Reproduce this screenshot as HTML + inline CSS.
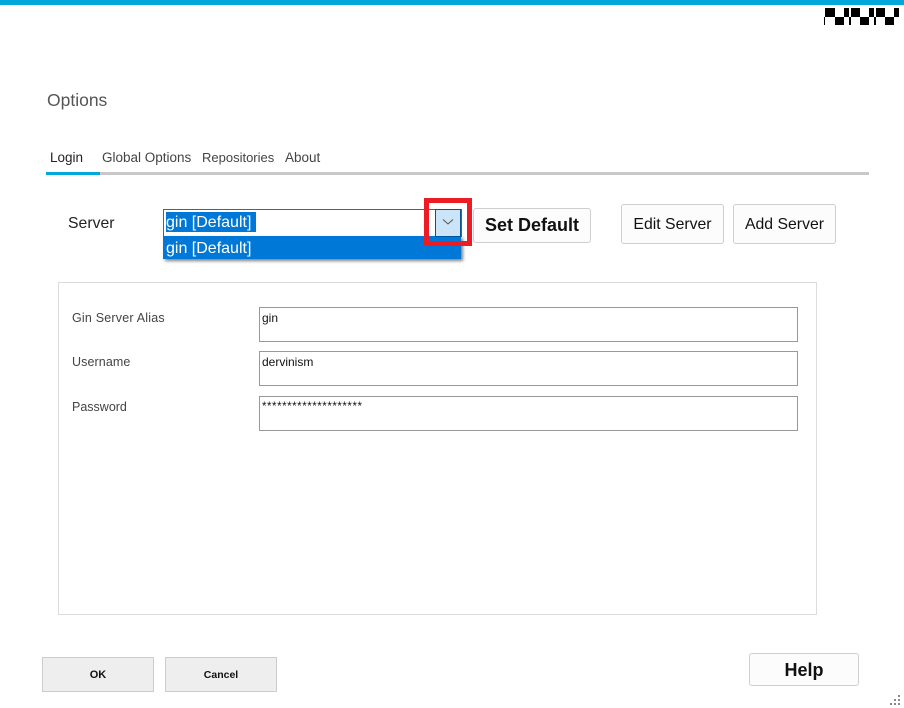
<!DOCTYPE html>
<html lang="en">
<head>
<meta charset="utf-8">
<title>Options</title>
<style>
html,body{margin:0;padding:0;background:#fff;}
body{position:relative;width:904px;height:708px;overflow:hidden;font-family:"Liberation Sans",sans-serif;color:#000;}
.a{position:absolute;box-sizing:border-box;}
.t{position:absolute;white-space:nowrap;line-height:1;}
.k{position:absolute;background:#000;}
.btn{position:absolute;box-sizing:border-box;background:#fcfcfc;border:1px solid #cfcfcf;border-radius:3px;text-align:center;white-space:nowrap;}
.inp{position:absolute;box-sizing:border-box;left:259px;width:539px;height:35px;border:1px solid #999;background:#fff;font-size:12px;line-height:1;padding:4px 0 0 2px;color:#111;}
.lbl{position:absolute;left:72px;font-size:12.5px;line-height:1;color:#444;white-space:nowrap;}
.gb{position:absolute;box-sizing:border-box;top:657px;width:112px;height:35px;background:#eee;border:1px solid #ccc;text-align:center;font-size:11px;font-weight:bold;line-height:35px;color:#111;}
</style>
</head>
<body>
<div class="a" style="left:0;top:0;width:904px;height:5px;background:#00a9d9;"></div>

<div class="k" style="left:825px;top:8px;width:10px;height:9px;"></div>
<div class="k" style="left:844px;top:8px;width:5px;height:9px;"></div>
<div class="k" style="left:851px;top:8px;width:9px;height:9px;"></div>
<div class="k" style="left:869px;top:8px;width:5px;height:9px;"></div>
<div class="k" style="left:876px;top:8px;width:9px;height:9px;"></div>
<div class="k" style="left:894px;top:8px;width:5px;height:9px;"></div>
<div class="k" style="left:824px;top:17px;width:1px;height:8px;"></div>
<div class="k" style="left:835px;top:17px;width:9px;height:8px;"></div>
<div class="k" style="left:849px;top:17px;width:2px;height:8px;"></div>
<div class="k" style="left:860px;top:17px;width:9px;height:8px;"></div>
<div class="k" style="left:874px;top:17px;width:2px;height:8px;"></div>
<div class="k" style="left:885px;top:17px;width:9px;height:8px;"></div>

<div class="t" style="left:47px;top:92px;font-size:17.5px;color:#555;">Options</div>

<div class="t" style="left:50px;top:151px;font-size:13.5px;color:#222;">Login</div>
<div class="t" style="left:102px;top:151px;font-size:13.5px;color:#444;">Global Options</div>
<div class="t" style="left:202px;top:151px;font-size:13px;color:#444;">Repositories</div>
<div class="t" style="left:285px;top:151px;font-size:13.5px;color:#444;">About</div>
<div class="a" style="left:46px;top:172px;width:823px;height:3px;background:#c8c8c8;"></div>
<div class="a" style="left:46px;top:172px;width:54px;height:3px;background:#00a9d9;"></div>

<div class="t" style="left:68px;top:216px;font-size:15.8px;color:#222;">Server</div>

<div class="a" style="left:163px;top:209px;width:299px;height:28px;background:#fff;border:1px solid #0078d7;"></div>
<div class="a" style="left:166px;top:212px;width:90px;height:20px;background:#0078d7;"></div>
<div class="t" style="left:166px;top:215px;font-size:16px;color:#fff;">gin [Default]</div>
<div class="a" style="left:163px;top:236px;width:298px;height:23px;background:#0078d7;box-shadow:2px 2px 3px rgba(0,0,0,.5);"></div>
<div class="t" style="left:166px;top:241px;font-size:16px;color:#fff;">gin [Default]</div>

<div class="a" style="left:435px;top:209px;width:26px;height:28px;background:#cce4f7;border:1px solid #005499;"></div>
<svg class="a" style="left:442px;top:218px;" width="12" height="8" viewBox="0 0 12 8"><path d="M1 1.5 L6 6 L11 1.5" fill="none" stroke="#555" stroke-width="1"/></svg>

<div class="a" style="left:424px;top:198px;width:48px;height:48px;border:5px solid #ed1c24;"></div>

<div class="btn" style="left:473px;top:208px;width:118px;height:35px;font-size:18px;font-weight:bold;line-height:33px;color:#111;">Set Default</div>
<div class="btn" style="left:621px;top:204px;width:103px;height:40px;font-size:15.8px;line-height:39px;color:#111;">Edit Server</div>
<div class="btn" style="left:733px;top:204px;width:103px;height:40px;font-size:15.8px;line-height:39px;color:#111;">Add Server</div>

<div class="a" style="left:58px;top:282px;width:759px;height:333px;border:1px solid #dcdcdc;"></div>

<div class="lbl" style="top:312px;letter-spacing:.2px;">Gin Server Alias</div>
<div class="lbl" style="top:356px;letter-spacing:.1px;">Username</div>
<div class="lbl" style="top:401px;">Password</div>

<div class="inp" style="top:307px;">gin</div>
<div class="inp" style="top:351px;">dervinism</div>
<div class="inp" style="top:396px;padding-top:5px;font-size:11.5px;letter-spacing:.55px;">********************</div>

<div class="gb" style="left:42px;">OK</div>
<div class="gb" style="left:165px;font-size:10.5px;">Cancel</div>

<div class="btn" style="left:749px;top:653px;width:110px;height:33px;font-size:18px;font-weight:bold;line-height:32px;color:#111;">Help</div>

<svg class="a" style="left:888px;top:694px;" width="14" height="12" viewBox="0 0 14 12">
<rect x="10" y="1" width="2" height="2" fill="#888"/>
<rect x="6" y="5" width="2" height="2" fill="#888"/>
<rect x="10" y="5" width="2" height="2" fill="#888"/>
<rect x="2" y="9" width="2" height="2" fill="#888"/>
<rect x="6" y="9" width="2" height="2" fill="#888"/>
<rect x="10" y="9" width="2" height="2" fill="#888"/>
</svg>
</body>
</html>
